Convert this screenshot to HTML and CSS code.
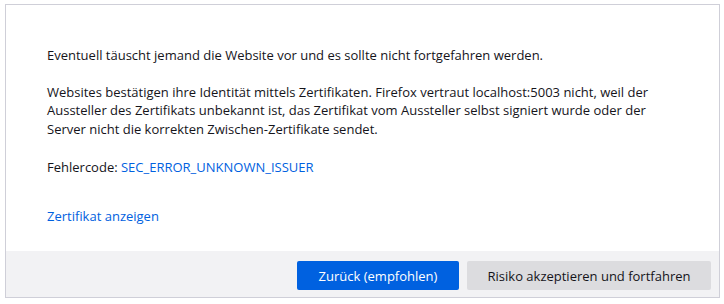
FILE: index.html
```html
<!DOCTYPE html>
<html lang="de">
<head>
<meta charset="utf-8">
<title>Warnung</title>
<link rel="stylesheet" href="styles.css">
</head>
<body>
<div class="panel">
  <div class="content">
    <p class="para">Eventuell täuscht jemand die Website vor und es sollte nicht fortgefahren werden.</p>
    <p class="para">Websites bestätigen ihre Identität mittels Zertifikaten. Firefox vertraut localhost:5003 nicht, weil der Aussteller des Zertifikats unbekannt ist, das Zertifikat vom Aussteller selbst signiert wurde oder der Server nicht die korrekten Zwischen-Zertifikate sendet.</p>
    <p class="para code">Fehlercode: <a class="link" href="#">SEC_ERROR_UNKNOWN_ISSUER</a></p>
    <p class="para cert"><a class="link" href="#">Zertifikat anzeigen</a></p>
  </div>
  <div class="footer">
    <button class="btn primary">Zurück (empfohlen)</button>
    <button class="btn secondary">Risiko akzeptieren und fortfahren</button>
  </div>
</div>
</body>
</html>
```
FILE: styles.css
```css
html, body {
  margin: 0;
  padding: 0;
  background: #ffffff;
}
body {
  padding: 4px 4px 0 5px;
  font-family: "Open Sans", "Noto Sans", sans-serif;
  font-size: 13px;
  color: #15141a;
}
.panel {
  width: 713px;
  height: 292px;
  border: 1px solid #cfcfd8;
  display: flex;
  flex-direction: column;
}
.content {
  flex: 1;
  padding: 41px 40px 0 41px;
}
.para {
  margin: 0 0 18px 0;
  line-height: 18.5px;
}
.code {
  margin-top: 20px;
}
.cert {
  margin-top: 30px;
}
.link {
  color: #0061e0;
  text-decoration: none;
}
.footer {
  height: 46px;
  background: #f2f2f4;
  display: flex;
  justify-content: flex-end;
  align-items: flex-start;
  gap: 8px;
  padding: 10px 8px 0 0;
  box-sizing: border-box;
}
.btn {
  height: 29px;
  border: none;
  border-radius: 2px;
  font-family: inherit;
  font-size: 13px;
  padding: 0;
  white-space: nowrap;
}
.primary {
  width: 162px;
  background: #0061e0;
  color: #ffffff;
}
.secondary {
  width: 244px;
  background: #dcdcdf;
  color: #15141a;
}
```
